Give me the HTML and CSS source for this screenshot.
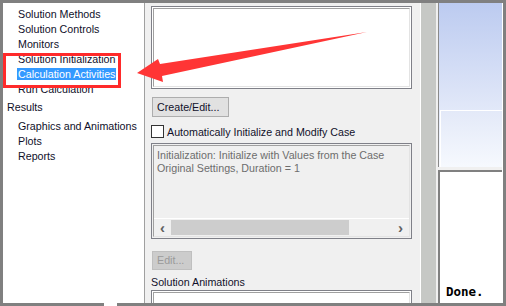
FILE: index.html
```html
<!DOCTYPE html>
<html>
<head>
<meta charset="utf-8">
<link rel="stylesheet" href="styles.css">
</head>
<body>
<div class="frame">
  <div class="tree">
    <div class="item child">Solution Methods</div>
    <div class="item child">Solution Controls</div>
    <div class="item child">Monitors</div>
    <div class="item child">Solution Initialization</div>
    <div class="item child"><span class="sel">Calculation Activities</span></div>
    <div class="item child">Run Calculation</div>
    <div class="item top">Results</div>
    <div class="item child">Graphics and Animations</div>
    <div class="item child">Plots</div>
    <div class="item child">Reports</div>
  </div>
  <div class="panel">
    <div class="listbox lb1"><div class="lb-inner"></div></div>
    <div class="btn create">Create/Edit...</div>
    <label class="check"><span class="box"></span>Automatically Initialize and Modify Case</label>
    <div class="listbox tb"><div class="lb-inner tb-inner">
      <div class="tb-text">Initialization: Initialize with Values from the Case<br>Original Settings, Duration = 1</div>
      <div class="hscroll">
        <span class="arr">&lsaquo;</span>
        <span class="thumb"></span>
        <span class="track"></span>
        <span class="arr">&rsaquo;</span>
      </div>
    </div></div>
    <div class="btn disabled">Edit...</div>
    <div class="label">Solution Animations</div>
    <div class="listbox lb2"><div class="lb-inner"></div></div>
  </div>
  <div class="splitter"></div>
  <div class="gap"></div>
  <div class="right">
    <div class="sky"><div class="sky-inner"></div></div>
    <div class="console"><span class="done">Done.</span></div>
  </div>
  <div class="notch"></div>
</div>
<div class="redbox"></div>
<svg class="arrow" width="506" height="306" viewBox="0 0 506 306">
  <polygon points="137,73 158,59 160,64 367,32 162,76 163,82" fill="#ff3535"/>
</svg>
</body>
</html>
```
FILE: styles.css
```css
html, body {
  margin: 0;
  padding: 0;
}
body {
  width: 506px;
  height: 306px;
  overflow: hidden;
  position: relative;
  background: #fff;
  font-family: "Liberation Sans", Arial, sans-serif;
  font-size: 10.7px;
  color: #10102a;
}
.frame {
  box-sizing: border-box;
  width: 506px;
  height: 306px;
  border: 3px solid #808080;
  display: flex;
  position: relative;
}
.tree {
  width: 141px;
  flex-shrink: 0;
  background: #fff;
  border-right: 1px solid #a0a0a0;
  padding-top: 4px;
}
.item {
  height: 15px;
  line-height: 15px;
  white-space: nowrap;
}
.child { padding-left: 15px; }
.top { padding-left: 4px; margin-top: 3px; margin-bottom: 4px; }
.sel {
  display: inline-block;
  background: #3399ff;
  color: #fff;
  line-height: 12px;
  padding: 0 1px;
  margin-left: -1px;
}
.panel {
  width: 276px;
  flex-shrink: 0;
  background: #f0f0f0;
  border-right: 1px solid #fff;
  padding-left: 6px;
  box-sizing: border-box;
  display: flex;
  flex-direction: column;
  align-items: flex-start;
  overflow: hidden;
}
.panel > * { flex-shrink: 0; }
.listbox {
  box-sizing: border-box;
  width: 261px;
  border: 1px solid #7f8088;
  padding: 1px;
  background: #fff;
}
.lb-inner {
  box-sizing: border-box;
  height: 100%;
  border: 1px solid;
  border-color: #a0a0a0 #e3e3e3 #e3e3e3 #a0a0a0;
  background: #fff;
}
.lb1 { margin-top: 3px; height: 83px; }
.btn {
  box-sizing: border-box;
  border: 1px solid #adadad;
  background: #e1e1e1;
  margin-left: 1px;
  padding: 0 4px;
  line-height: 18px;
  white-space: nowrap;
}
.create { margin-top: 8px; width: 77px; height: 20px; }
.check {
  display: flex;
  align-items: center;
  margin-top: 8px;
  height: 13px;
  white-space: nowrap;
}
.box {
  box-sizing: border-box;
  width: 13px;
  height: 13px;
  border: 1px solid #333;
  background: #fff;
  margin-right: 3px;
}
.tb { margin-top: 5px; height: 96px; background: #f0f0f0; }
.tb-inner {
  background: #f0f0f0;
  display: flex;
  flex-direction: column;
}
.tb-text {
  flex: 1;
  color: #6d6d6d;
  padding: 3px 0 0 3px;
  line-height: 13px;
  white-space: nowrap;
  overflow: hidden;
}
.hscroll {
  height: 17px;
  display: flex;
  align-items: center;
  background: #f0f0f0;
  border-top: 1px solid #fff;
}
.arr {
  width: 17px;
  text-align: center;
  font-size: 15px;
  font-weight: bold;
  color: #606060;
  line-height: 15px;
}
.thumb { width: 178px; height: 15px; background: #cdcdcd; }
.track { flex: 1; }
.disabled {
  margin-top: 12px;
  width: 40px;
  height: 19px;
  line-height: 17px;
  background: #cccccc;
  border-color: #bfbfbf;
  color: #9a9a9a;
}
.label { margin-top: 6px; line-height: 13px; white-space: nowrap; }
.lb2 { margin-top: 1px; height: 30px; }
.splitter { width: 15px; flex-shrink: 0; background: #c6c8c5; }
.gap { width: 2px; flex-shrink: 0; background: #f0f0f0; }
.right {
  width: 64px;
  flex-shrink: 0;
  display: flex;
  flex-direction: column;
  background: #f0f0f0;
}
.sky {
  height: 164px;
  flex-shrink: 0;
  border-left: 1px solid #8a8a8a;
  background: linear-gradient(#bccbf0, #dfe6f8 60%, #f6f9fe);
  padding-top: 107px;
  box-sizing: border-box;
}
.sky-inner {
  height: 57px;
  border-top: 1px solid #fff;
  border-left: 1px solid #fff;
  margin-left: 1px;
  box-sizing: border-box;
  background: linear-gradient(#e3e9f8, #f6f9fe);
}
.console {
  margin-top: 3px;
  flex: 1;
  background: #fff;
  border-top: 2px solid #808080;
  border-left: 2px solid #808080;
  display: flex;
  align-items: flex-end;
  padding: 0 0 5px 6px;
}
.done {
  font-family: "DejaVu Sans Mono", "Liberation Mono", monospace;
  font-weight: bold;
  font-size: 12.5px;
  color: #000;
  line-height: 13px;
}
.notch {
  position: absolute;
  left: 101px;
  bottom: -3px;
  width: 13px;
  height: 3px;
  background: #fff;
}
.redbox {
  position: absolute;
  left: 3px;
  top: 53px;
  width: 112px;
  height: 29px;
  border: 3px solid #ff2a2a;
}
.arrow {
  position: absolute;
  left: 0;
  top: 0;
}
```
